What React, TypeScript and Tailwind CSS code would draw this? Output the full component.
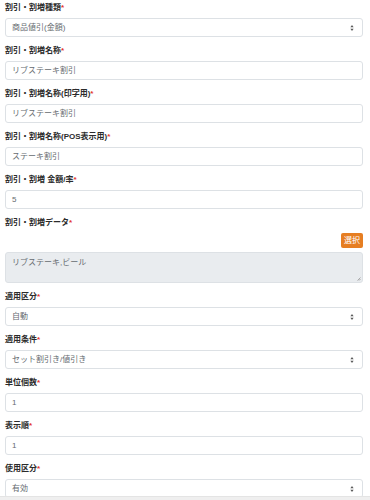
import React from "react";

const font = { fontFamily: '"Liberation Sans", "Noto Sans CJK JP", sans-serif' };

function Label({ text }: { text: string }) {
  return (
    <div className="h-[14px] leading-[14px] text-[8px] font-bold text-[#2b2b2b]">
      {text}
      <span className="text-[#e3342f]">*</span>
    </div>
  );
}

function Arrows() {
  return (
    <svg width="4" height="6" viewBox="0 0 4 6" className="absolute right-[8px] top-1/2 -translate-y-1/2">
      <path d="M2 0 L3.6 2.3 L0.4 2.3 Z" fill="#555" />
      <path d="M2 6 L3.6 3.7 L0.4 3.7 Z" fill="#555" />
    </svg>
  );
}

function Box({ value, select }: { value: string; select?: boolean }) {
  return (
    <div className="relative mt-[3px] h-[19px] rounded-[3px] border border-[#dde1e5] bg-white pl-[6px] flex items-center text-[8px] text-[#666b70]">
      {value}
      {select && <Arrows />}
    </div>
  );
}

function Field({ label, value, select }: { label: string; value: string; select?: boolean }) {
  return (
    <div className="mb-[7px]">
      <Label text={label} />
      <Box value={value} select={select} />
    </div>
  );
}

export default function App() {
  return (
    <div className="relative w-[370px] h-[500px] overflow-hidden bg-white" style={font}>
      <div className="pl-[5px] pr-[7px] pt-[1px]">
        <Field label="割引・割増種類" value="商品値引(金額)" select />
        <Field label="割引・割増名称" value="リブステーキ割引" />
        <Field label="割引・割増名称(印字用)" value="リブステーキ割引" />
        <Field label="割引・割増名称(POS表示用)" value="ステーキ割引" />
        <Field label="割引・割増 金額/率" value="5" />
        <div className="mb-[7px]">
          <Label text="割引・割増データ" />
          <div className="mt-[3px] flex justify-end">
            <div className="h-[15px] px-[3px] rounded-[2px] bg-[#e67e22] text-white text-[8px] flex items-center">
              選択
            </div>
          </div>
          <div className="relative mt-[4px] h-[31px] rounded-[3px] border border-[#dde1e5] bg-[#e9ecef] px-[6px] pt-[5px] text-[8px] leading-[10px] text-[#666b70]">
            リブステーキ,ビール
            <svg width="4" height="4" viewBox="0 0 4 4" className="absolute right-[1px] bottom-[1px]">
              <path d="M0.5 3.5 L3.5 0.5 M2 3.5 L3.5 2" stroke="#999" strokeWidth="0.8" />
            </svg>
          </div>
        </div>
        <Field label="適用区分" value="自動" select />
        <Field label="適用条件" value="セット割引き/値引き" select />
        <Field label="単位個数" value="1" />
        <Field label="表示順" value="1" />
        <Field label="使用区分" value="有効" select />
      </div>
      <div className="absolute bottom-0 left-0 w-full h-[4px] bg-[#efefef] border-t border-[#e4e4e4]" />
    </div>
  );
}
